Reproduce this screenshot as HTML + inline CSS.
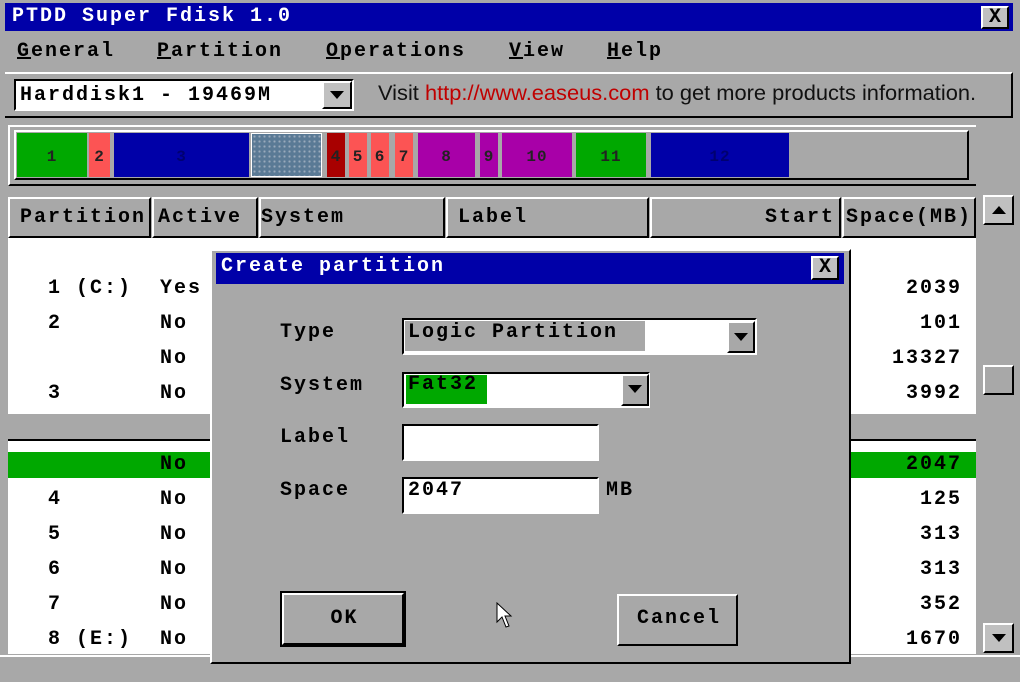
<!DOCTYPE html><html><head><style>
*{margin:0;padding:0;box-sizing:border-box}
body{width:1020px;height:682px;background:#a8a8a8;position:relative;overflow:hidden;font-family:"Liberation Mono",monospace;font-weight:bold;font-size:20px;letter-spacing:2px;color:#000}
.a{position:absolute}
.t{position:absolute;white-space:nowrap;line-height:20px}
.rs{border-top:2px solid #fff;border-left:2px solid #fff;border-right:2px solid #000;border-bottom:2px solid #000}
.sk{border-top:2px solid #000;border-left:2px solid #000;border-right:2px solid #fff;border-bottom:2px solid #fff}
.seg{position:absolute;top:133px;height:44px;text-align:center;line-height:48px;font-size:16px;color:#222;letter-spacing:1px}
.hd{position:absolute;top:197px;height:41px;background:#a8a8a8;line-height:38px;padding:0 4px}
.tri{width:0;height:0;border-left:7px solid transparent;border-right:7px solid transparent;border-top:8px solid #000;position:absolute}
u{text-decoration:underline}
</style></head><body>
<div class="a" style="left:5px;top:3px;width:1008px;height:28px;background:#0000a8"></div>
<div class="t" style="left:12px;top:7px;color:#fff">PTDD Super Fdisk 1.0</div>
<div class="a rs" style="left:981px;top:6px;width:28px;height:23px;background:#c0c0c0;text-align:center;line-height:19px;font-size:20px;letter-spacing:0">X</div>
<div class="t" style="left:17px;top:42px"><u>G</u>eneral</div>
<div class="t" style="left:157px;top:42px"><u>P</u>artition</div>
<div class="t" style="left:326px;top:42px"><u>O</u>perations</div>
<div class="t" style="left:509px;top:42px"><u>V</u>iew</div>
<div class="t" style="left:607px;top:42px"><u>H</u>elp</div>
<div class="a" style="left:5px;top:72px;width:1008px;height:46px;border-top:2px solid #fff;border-bottom:2px solid #000;border-right:2px solid #000"></div>
<div class="a sk" style="left:14px;top:79px;width:340px;height:32px;background:#fff"></div>
<div class="t" style="left:20px;top:86px">Harddisk1 - 19469M</div>
<div class="a rs" style="left:322px;top:81px;width:30px;height:28px;background:#c0c0c0"><div class="tri" style="left:6px;top:8px"></div></div>
<div class="t" style="left:378px;top:84px;font-family:'Liberation Sans',sans-serif;font-weight:normal;font-size:21px;letter-spacing:0;transform:scaleX(1.04);transform-origin:left;color:#111">Visit <span style="color:#c00000">http://www.easeus.com</span> to get more products information.</div>
<div class="a" style="left:8px;top:125px;width:968px;height:61px;border-top:2px solid #fff;border-bottom:2px solid #000;border-left:2px solid #fff"></div>
<div class="a rs" style="left:14px;top:130px;width:955px;height:50px;background:#a8a8a8"></div>
<div class="seg" style="left:17px;width:70px;background:#00a800">1</div>
<div class="seg" style="left:89px;width:21px;background:#fc5454">2</div>
<div class="seg" style="left:114px;width:135px;background:#0000a8;color:#000070">3</div>
<div class="seg" style="left:251px;width:71px;background:#5a7a95;border:1px solid #fff;background-image:radial-gradient(#9ab 1px,transparent 1.2px);background-size:5px 5px"></div>
<div class="seg" style="left:327px;width:18px;background:#a80000">4</div>
<div class="seg" style="left:349px;width:18px;background:#fc5454">5</div>
<div class="seg" style="left:371px;width:18px;background:#fc5454">6</div>
<div class="seg" style="left:395px;width:18px;background:#fc5454">7</div>
<div class="seg" style="left:418px;width:57px;background:#a800a8">8</div>
<div class="seg" style="left:480px;width:18px;background:#a800a8">9</div>
<div class="seg" style="left:502px;width:70px;background:#a800a8">10</div>
<div class="seg" style="left:576px;width:70px;background:#00a800">11</div>
<div class="seg" style="left:651px;width:138px;background:#0000a8;color:#000070">12</div>
<div class="a" style="left:8px;top:238px;width:968px;height:416px;background:#fff"></div>
<div class="hd rs" style="left:8px;width:143px;padding:0 2px 0 10px">Partition</div>
<div class="hd rs" style="left:152px;width:106px">Active</div>
<div class="hd rs" style="left:259px;width:186px;padding:0">System</div>
<div class="hd rs" style="left:446px;width:203px;padding-left:10px">Label</div>
<div class="hd rs" style="left:650px;width:191px;text-align:right">Start</div>
<div class="hd rs" style="left:842px;width:134px;padding:0 2px">Space(MB)</div>
<div class="a" style="left:983px;top:195px;width:32px;height:458px;background:#a8a8a8"></div>
<div class="a rs" style="left:983px;top:195px;width:31px;height:30px;background:#c0c0c0"><div class="tri" style="left:7px;top:9px;border-top:0;border-bottom:8px solid #000"></div></div>
<div class="a rs" style="left:983px;top:365px;width:31px;height:30px;background:#a8a8a8"></div>
<div class="a rs" style="left:983px;top:623px;width:31px;height:30px;background:#c0c0c0"><div class="tri" style="left:7px;top:9px"></div></div>
<div class="a" style="left:8px;top:414px;width:968px;height:27px;background:#a8a8a8;border-bottom:2px solid #000"></div>
<div class="a" style="left:8px;top:452px;width:968px;height:26px;background:#00a800"></div>
<div class="t" style="left:48px;top:279px">1 (C:)</div><div class="t" style="left:160px;top:279px">Yes</div><div class="t" style="left:906px;top:279px">2039</div>
<div class="t" style="left:48px;top:314px">2</div><div class="t" style="left:160px;top:314px">No</div><div class="t" style="left:920px;top:314px">101</div>
<div class="t" style="left:160px;top:349px">No</div><div class="t" style="left:892px;top:349px">13327</div>
<div class="t" style="left:48px;top:384px">3</div><div class="t" style="left:160px;top:384px">No</div><div class="t" style="left:906px;top:384px">3992</div>
<div class="t" style="left:160px;top:455px">No</div><div class="t" style="left:906px;top:455px">2047</div>
<div class="t" style="left:48px;top:490px">4</div><div class="t" style="left:160px;top:490px">No</div><div class="t" style="left:920px;top:490px">125</div>
<div class="t" style="left:48px;top:525px">5</div><div class="t" style="left:160px;top:525px">No</div><div class="t" style="left:920px;top:525px">313</div>
<div class="t" style="left:48px;top:560px">6</div><div class="t" style="left:160px;top:560px">No</div><div class="t" style="left:920px;top:560px">313</div>
<div class="t" style="left:48px;top:595px">7</div><div class="t" style="left:160px;top:595px">No</div><div class="t" style="left:920px;top:595px">352</div>
<div class="t" style="left:48px;top:630px">8 (E:)</div><div class="t" style="left:160px;top:630px">No</div><div class="t" style="left:906px;top:630px">1670</div>
<div class="a" style="left:0;top:655px;width:1020px;height:27px;background:#a8a8a8;border-top:2px solid #fff"></div>
<div class="a" style="left:210px;top:249px;width:641px;height:415px;background:#a8a8a8;border-top:2px solid #fff;border-left:2px solid #fff;border-right:2px solid #000;border-bottom:2px solid #000"></div>
<div class="a" style="left:216px;top:253px;width:628px;height:31px;background:#0000a8"></div>
<div class="t" style="left:221px;top:257px;color:#fff">Create partition</div>
<div class="a rs" style="left:811px;top:256px;width:28px;height:24px;background:#c0c0c0;text-align:center;line-height:20px;font-size:20px;letter-spacing:0">X</div>
<div class="t" style="left:280px;top:323px">Type</div>
<div class="t" style="left:280px;top:376px">System</div>
<div class="t" style="left:280px;top:428px">Label</div>
<div class="t" style="left:280px;top:481px">Space</div>
<div class="a sk" style="left:402px;top:318px;width:355px;height:37px;background:#fff"></div>
<div class="a" style="left:405px;top:321px;width:240px;height:30px;background:#a8a8a8"></div>
<div class="t" style="left:408px;top:323px">Logic Partition</div>
<div class="a rs" style="left:727px;top:321px;width:28px;height:32px;background:#a8a8a8"><div class="tri" style="left:5px;top:10px"></div></div>
<div class="a sk" style="left:402px;top:372px;width:248px;height:36px;background:#fff"></div>
<div class="a" style="left:406px;top:375px;width:81px;height:29px;background:#00a800"></div>
<div class="t" style="left:408px;top:375px">Fat32</div>
<div class="a rs" style="left:621px;top:374px;width:28px;height:32px;background:#a8a8a8"><div class="tri" style="left:5px;top:9px"></div></div>
<div class="a sk" style="left:402px;top:424px;width:197px;height:37px;background:#fff"></div>
<div class="a sk" style="left:402px;top:477px;width:197px;height:37px;background:#fff"></div>
<div class="t" style="left:408px;top:481px">2047</div>
<div class="t" style="left:606px;top:481px">MB</div>
<div class="a" style="left:280px;top:591px;width:126px;height:56px;border:2px solid #000;background:#a8a8a8"><div class="rs" style="width:100%;height:100%;text-align:center;line-height:48px;padding-left:3px">OK</div></div>
<div class="a rs" style="left:617px;top:594px;width:121px;height:52px;background:#a8a8a8;text-align:center;line-height:46px;padding-left:3px">Cancel</div>
<svg class="a" style="left:496px;top:602px" width="18" height="28" viewBox="0 0 18 28"><path d="M1 1 L1 20 L6 15 L10 25 L13 24 L9 14 L15 14 Z" fill="#fff" stroke="#000" stroke-width="1"/></svg>
</body></html>
